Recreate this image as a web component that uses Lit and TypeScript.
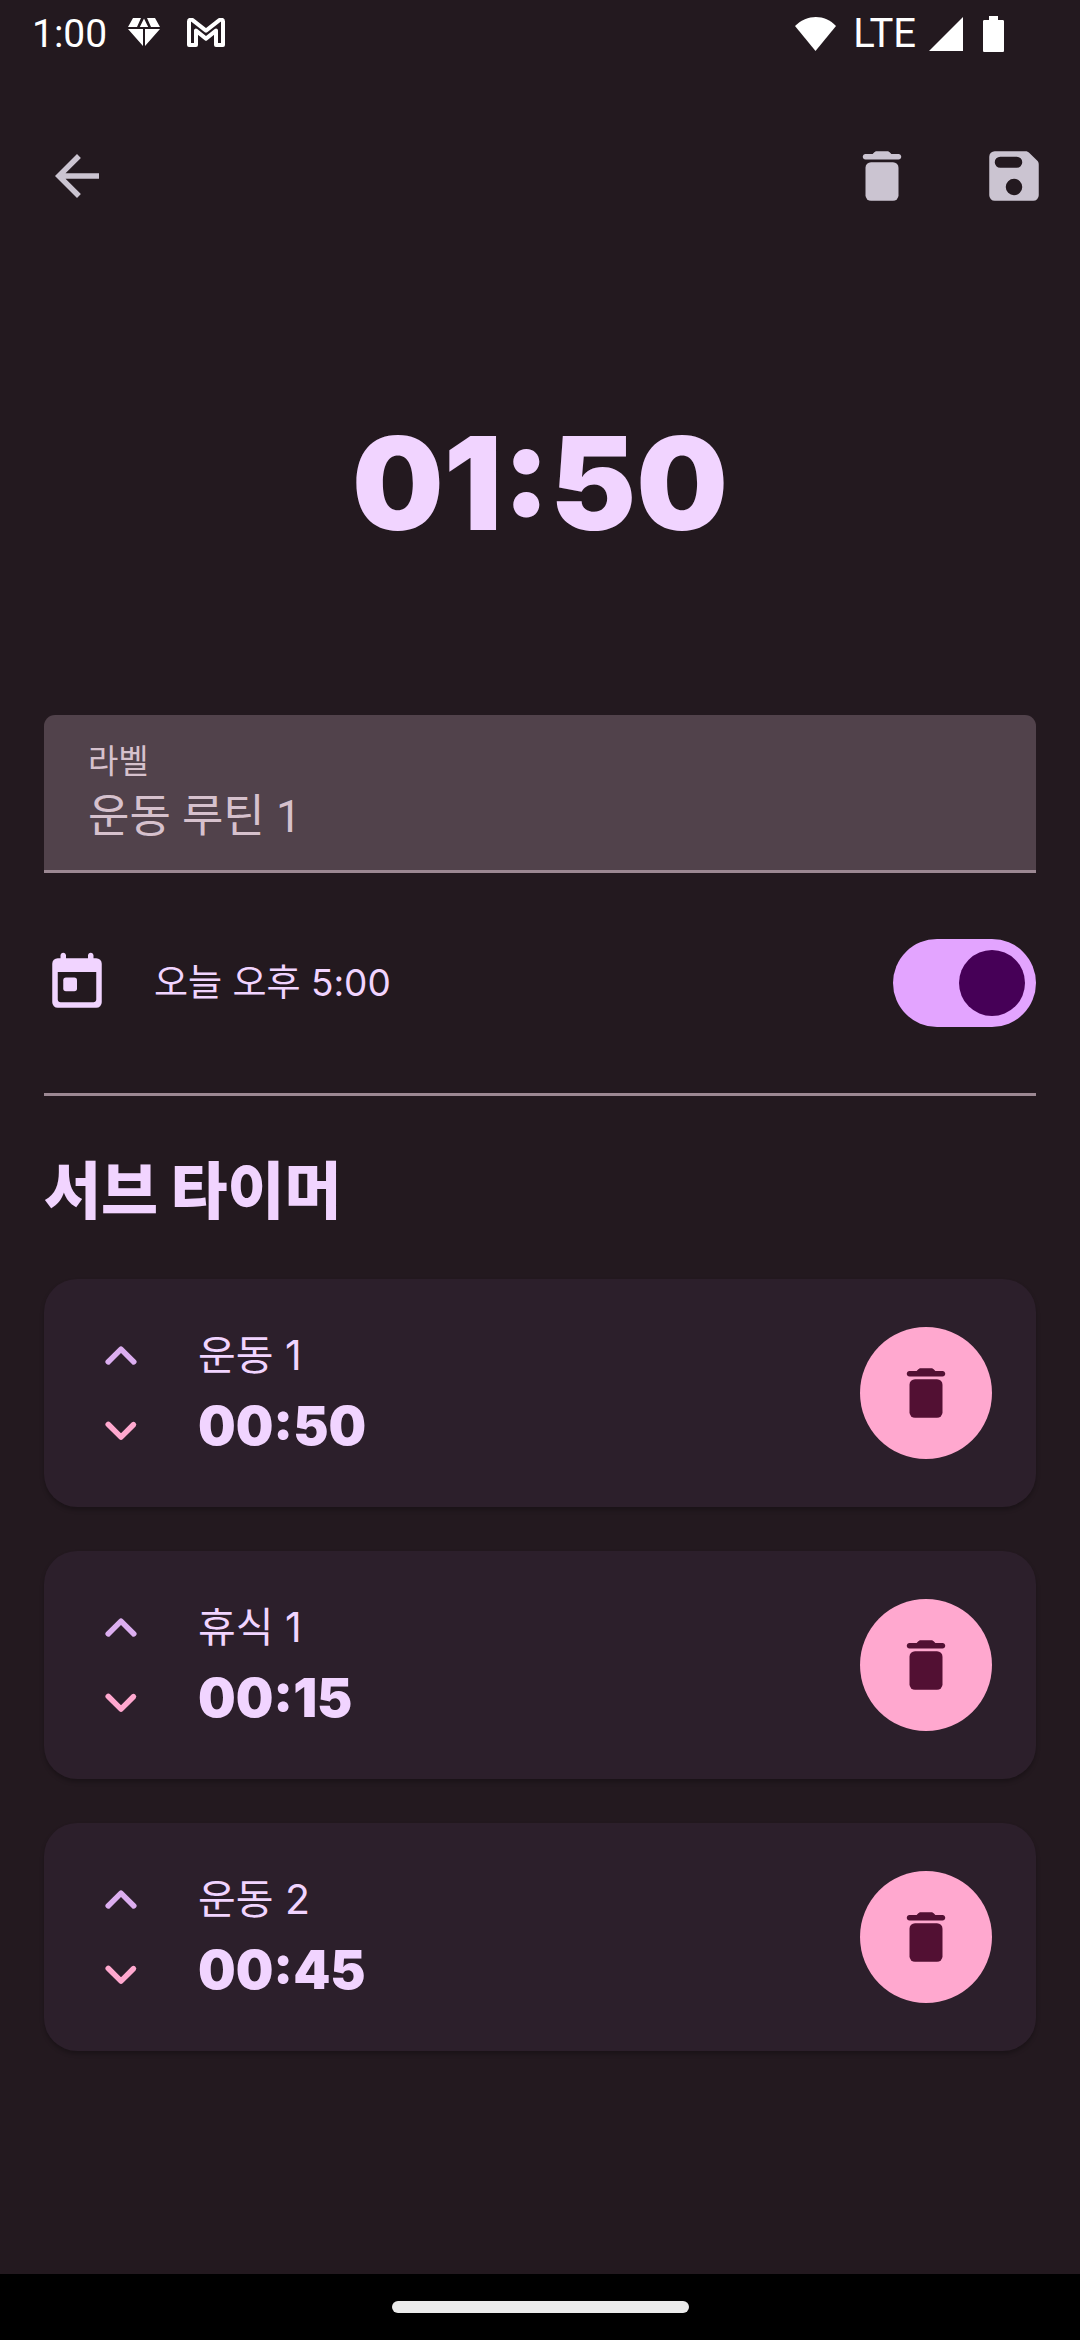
import { LitElement, html, svg, css } from "lit";
import { customElement, property, state } from "lit/decorators.js";

const trashShape = svg`
  <path d="M9.2 3.4C9.45 3.15 9.7 3 10.1 3h3.8c.4 0 .65.15.9.4l.6.6H18c.55 0 1 .45 1 1s-.45 1-1 1H6c-.55 0-1-.45-1-1s.45-1 1-1h2.6z"/>
  <rect x="6" y="7" width="12" height="14" rx="2"/>`;

const iconBase = css`
  .icon {
    display: block;
    width: 66px;
    height: 66px;
    fill: currentColor;
  }
  button {
    display: flex;
    align-items: center;
    justify-content: center;
    margin: 0;
    padding: 0;
    border: 0;
    background: none;
    cursor: pointer;
  }
`;

@customElement("status-bar")
class StatusBar extends LitElement {
  static styles = css`
    :host {
      display: flex;
      align-items: center;
      justify-content: space-between;
      box-sizing: border-box;
      height: 66px;
      padding: 2px 70px 0 32px;
      color: #fff;
      font: 400 39px/44px Roboto, sans-serif;
    }
    .group {
      display: flex;
      align-items: center;
    }
    .left {
      gap: 20px;
    }
    .right {
      gap: 12px;
    }
    .network {
      padding-left: 4px;
      font-size: 40px;
    }
    svg {
      display: block;
      fill: #fff;
    }
    .line {
      fill: none;
      stroke: #fff;
      stroke-width: 4;
      stroke-linejoin: round;
    }
  `;

  render() {
    return html`
      <div class="group left">
        <time>1:00</time>
        <svg width="34" height="32" viewBox="0 1 34 32" aria-hidden="true">
          <path d="M6 1h8L10 10H1z M20 1h8l5 9h-9z M17 1.5L21.2 10h-8.4z M1 12h15v17z M18 12h15L18 29z"/>
        </svg>
        <svg width="50" height="32" viewBox="-6 1 50 32" aria-hidden="true">
          <path class="line" d="M2 4.5C2 2.5 4.2 2 5.6 3.2L19 13.6 32.4 3.2C33.8 2 36 2.500 36 4.500V28H29V13.600L19 21.600 9 13.600V28H2z"/>
        </svg>
      </div>
      <div class="group right">
        <svg width="42" height="38" viewBox="0 0 42 38" aria-hidden="true">
          <path d="M0 11C12-1 30-1 41 11L20.500 36z"/>
        </svg>
        <span class="network">LTE</span>
        <svg width="36" height="36" viewBox="0 0 36 36" aria-hidden="true">
          <path d="M35 1v34H1z"/>
        </svg>
        <svg width="34" height="36" viewBox="-7 0 34 36" aria-hidden="true">
          <path d="M6 0h9v4h4.500c1 0 1.500.5 1.500 1.500v29c0 1-.5 1.500-1.500 1.500h-18C.5 36 0 35.500 0 34.500v-29C0 4.500.5 4 1.500 4H6z"/>
        </svg>
      </div>
    `;
  }
}

@customElement("sub-timer-card")
class SubTimerCard extends LitElement {
  @property() name = "";
  @property() time = "";

  static styles = [
    iconBase,
    css`
      :host {
        display: flex;
        align-items: center;
        gap: 44px;
        padding: 43px 44px;
        border-radius: 33px;
        background: #2c1f2b;
        box-shadow: 0 3px 4px rgba(0, 0, 0, 0.25);
        color: #f1d4ff;
        font-family: Inter, "Noto Sans CJK KR", sans-serif;
      }
      .order {
        display: flex;
        flex-direction: column;
        gap: 8px;
      }
      .up {
        color: #dcaef0;
      }
      .down {
        color: #ffa8cf;
      }
      .info {
        flex: 1;
      }
      .name {
        font-size: 41px;
        font-weight: 400;
        line-height: 66px;
      }
      .time {
        display: block;
        font-size: 53px;
        font-weight: 900;
        line-height: 76px;
      }
      .delete {
        width: 132px;
        height: 132px;
        border-radius: 50%;
        background: #ffa8cf;
        color: #521033;
      }
    `,
  ];

  render() {
    return html`
      <div class="order">
        <button class="up" aria-label="위로 이동">
          <svg class="icon" viewBox="0 0 24 24" aria-hidden="true">
            <path d="M11.290 8.790L6.700 13.380a1 1 0 1 0 1.410 1.410L12 10.910l3.880 3.880a1 1 0 1 0 1.410-1.410L12.700 8.790a1 1 0 0 0-1.410 0z"/>
          </svg>
        </button>
        <button class="down" aria-label="아래로 이동">
          <svg class="icon" viewBox="0 0 24 24" aria-hidden="true">
            <path d="M15.880 9.290L12 13.170 8.120 9.290a1 1 0 1 0-1.410 1.410l4.590 4.590a1 1 0 0 0 1.410 0l4.590-4.590a1 1 0 0 0-1.410-1.410z"/>
          </svg>
        </button>
      </div>
      <div class="info">
        <div class="name">${this.name}</div>
        <time class="time">${this.time}</time>
      </div>
      <button class="delete" aria-label="삭제">
        <svg class="icon" viewBox="0 0 24 24" aria-hidden="true">${trashShape}</svg>
      </button>
    `;
  }
}

@customElement("app-root")
class AppRoot extends LitElement {
  @state() private timers = [
    { name: "운동 1", time: "00:50" },
    { name: "휴식 1", time: "00:15" },
    { name: "운동 2", time: "00:45" },
  ];

  static styles = [
    iconBase,
    css`
      :host {
        display: flex;
        flex-direction: column;
        min-height: 100vh;
        background: #23191f;
        color: #f1d4ff;
        font-family: Inter, "Noto Sans CJK KR", sans-serif;
      }
      .appbar {
        display: flex;
        align-items: center;
        padding: 44px 0 22px 11px;
      }
      .appbar button {
        width: 132px;
        height: 132px;
        color: #cbc4d1;
      }
      .appbar .back {
        margin-right: auto;
      }
      main {
        flex: 1;
        display: flex;
        flex-direction: column;
        padding: 0 44px 44px;
      }
      .total {
        margin: 142px 0 155px;
        text-align: center;
        font-size: 129px;
        font-weight: 900;
        line-height: 154px;
      }
      .field {
        display: flex;
        flex-direction: column;
        padding: 25px 44px 20px;
        border-bottom: 3px solid #9c8893;
        border-radius: 11px 11px 0 0;
        background: #51424b;
        color: #d6c1cd;
        font-family: Roboto, "Noto Sans CJK KR", sans-serif;
      }
      .field label {
        font-size: 33px;
        line-height: 44px;
      }
      .field input {
        width: 100%;
        height: 66px;
        padding: 0;
        border: 0;
        outline: 0;
        background: none;
        color: inherit;
        font: inherit;
        font-size: 45px;
        line-height: 66px;
      }
      .schedule {
        display: flex;
        align-items: center;
        justify-content: space-between;
        padding: 66px 0;
        border-bottom: 3px solid #9c8893;
      }
      .schedule button {
        gap: 44px;
        color: inherit;
        font: inherit;
        font-size: 37px;
        line-height: 66px;
      }
      .switch {
        appearance: none;
        display: flex;
        justify-content: flex-end;
        width: 143px;
        height: 88px;
        margin: 0;
        padding: 11px;
        box-sizing: border-box;
        border-radius: 44px;
        background: #e3a4ff;
      }
      .switch::before {
        content: "";
        width: 66px;
        height: 66px;
        border-radius: 50%;
        background: #460057;
      }
      .switch:not(:checked) {
        justify-content: flex-start;
      }
      h2 {
        margin: 48px 0 40px;
        font-size: 62px;
        font-weight: 900;
        line-height: 95px;
      }
      .timers {
        display: flex;
        flex-direction: column;
        gap: 44px;
      }
      .navbar {
        display: flex;
        align-items: center;
        justify-content: center;
        height: 66px;
        background: #000;
      }
      .handle {
        width: 297px;
        height: 12px;
        border-radius: 6px;
        background: #ebebeb;
      }
    `,
  ];

  render() {
    return html`
      <status-bar></status-bar>
      <header class="appbar">
        <button class="back" aria-label="뒤로">
          <svg class="icon" viewBox="0 0 24 24" aria-hidden="true">
            <path d="M20 11H7.830l5.590-5.590L12 4l-8 8 8 8 1.410-1.410L7.830 13H20v-2z"/>
          </svg>
        </button>
        <button aria-label="삭제">
          <svg class="icon" viewBox="0 0 24 24" aria-hidden="true">${trashShape}</svg>
        </button>
        <button aria-label="저장">
          <svg class="icon" viewBox="0 0 24 24" aria-hidden="true">
            <path fill-rule="evenodd" d="M5 3h11.200c.5 0 1 .2 1.400.6l2.800 2.800c.4.4.6.9.6 1.400V19a2 2 0 0 1-2 2H5a2 2 0 0 1-2-2V5a2 2 0 0 1 2-2zM7 5a2 2 0 0 0 0 4h6a2 2 0 0 0 0-4zM12 13a3 3 0 1 0 0 6 3 3 0 1 0 0-6z"/>
          </svg>
        </button>
      </header>
      <main>
        <time class="total">01:50</time>
        <div class="field">
          <label for="label">라벨</label>
          <input id="label" type="text" .value=${"운동 루틴 1"} />
        </div>
        <div class="schedule">
          <button>
            <svg class="icon" viewBox="0 1 24 24" aria-hidden="true">
              <path fill-rule="evenodd" d="M7 2c.55 0 1 .45 1 1v1h8V3c0-.55.45-1 1-1s1 .45 1 1v1h1a2 2 0 0 1 2 2v14a2 2 0 0 1-2 2H5a2 2 0 0 1-2-2V6a2 2 0 0 1 2-2h1V3c0-.55.45-1 1-1zM5 9v10c0 .55.45 1 1 1h12c.55 0 1-.45 1-1V9z"/>
              <rect x="7" y="11" width="5" height="5" rx="1"/>
            </svg>
            <span>오늘 오후 5:00</span>
          </button>
          <input class="switch" type="checkbox" role="switch" aria-label="예약" checked />
        </div>
        <h2>서브 타이머</h2>
        <div class="timers">
          ${this.timers.map(
            (t) => html`<sub-timer-card .name=${t.name} .time=${t.time}></sub-timer-card>`
          )}
        </div>
      </main>
      <div class="navbar"><div class="handle"></div></div>
    `;
  }
}
